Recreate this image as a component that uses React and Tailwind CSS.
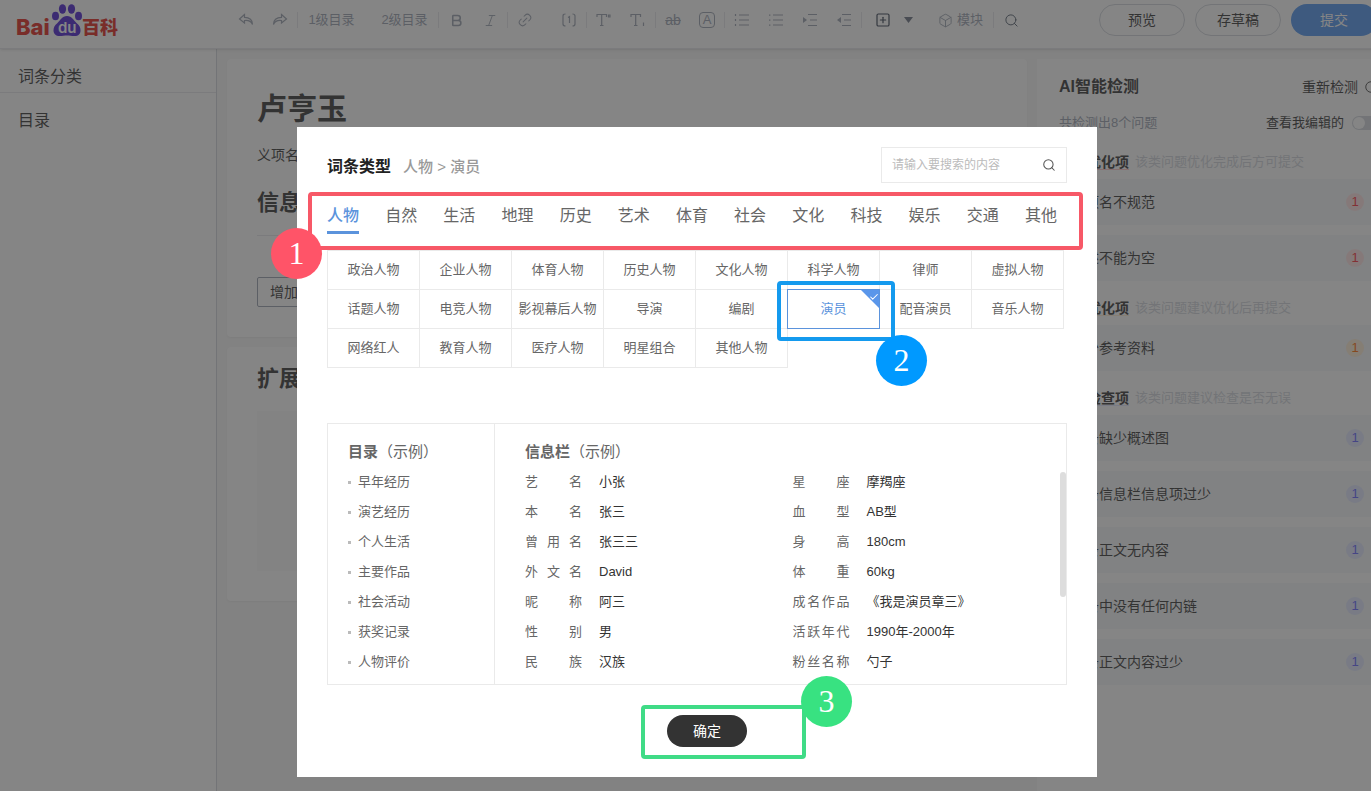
import { useState } from 'react';
import {
    Bold, Italic, Link2, Search, SquarePlus, Box, RotateCw, Check
} from 'lucide-react';

const tabs = ['人物', '自然', '生活', '地理', '历史', '艺术', '体育', '社会', '文化', '科技', '娱乐', '交通', '其他'];

const types = [
    '政治人物', '企业人物', '体育人物', '历史人物', '文化人物', '科学人物', '律师', '虚拟人物',
    '话题人物', '电竞人物', '影视幕后人物', '导演', '编剧', '演员', '配音演员', '音乐人物',
    '网络红人', '教育人物', '医疗人物', '明星组合', '其他人物'
];

const catalog = ['早年经历', '演艺经历', '个人生活', '主要作品', '社会活动', '获奖记录', '人物评价'];

const infoColumns = [
    [['艺名', '小张'], ['本名', '张三'], ['曾用名', '张三三'], ['外文名', 'David'], ['昵称', '阿三'], ['性别', '男'], ['民族', '汉族']],
    [['星座', '摩羯座'], ['血型', 'AB型'], ['身高', '180cm'], ['体重', '60kg'], ['成名作品', '《我是演员章三》'], ['活跃年代', '1990年-2000年'], ['粉丝名称', '勺子']]
];

const checks = [
    {
        title: '必须优化项', hint: '该类问题优化完成后方可提交', line: 'decoration-red-200',
        badge: 'bg-red-100 text-red-500', items: ['义项名不规范', '概述不能为空']
    },
    {
        title: '建议优化项', hint: '该类问题建议优化后再提交', line: 'decoration-orange-100',
        badge: 'bg-orange-100 text-orange-500', items: ['缺少参考资料']
    },
    {
        title: '建议检查项', hint: '该类问题建议检查是否无误', line: 'decoration-indigo-100',
        badge: 'bg-indigo-100 text-indigo-500',
        items: ['词条缺少概述图', '词条信息栏信息项过少', '词条正文无内容', '词条中没有任何内链', '词条正文内容过少']
    }
];

function Logo() {
    return (
        <a href="#" aria-label="百度百科" className="ml-4 block">
            <svg width="104" height="32" viewBox="0 0 104 32" className="overflow-visible" fontFamily="Inter, 'Noto Sans CJK SC', sans-serif" fontWeight="800">
                <text x="0" y="31" fontSize="22" fill="#e1251b">Bai</text>
                <g fill="#4a1fd0">
                    <ellipse cx="39.500" cy="12" rx="3.500" ry="4.300" />
                    <ellipse cx="46.500" cy="5" rx="3.600" ry="4.800" />
                    <ellipse cx="55.500" cy="5" rx="3.600" ry="4.800" />
                    <ellipse cx="62.500" cy="12" rx="3.500" ry="4.300" />
                    <path d="M51 12c-5 0-6.500 4-9.500 7-3 2.500-4 4.500-4 7.500 0 3.500 2.500 5.500 6 5.500 3 0 5-.5 7.500-.5s4.500.5 7.500.5c4 0 6-2 6-5.500 0-3-1-5-4-7.500-3-3-4.500-7-9.500-7z" />
                </g>
                <text x="42" y="29" fontSize="15" fontWeight="600" fill="#fff">du</text>
                <text x="66" y="30" fontSize="18" fill="#e1251b">百科</text>
            </svg>
        </a>
    );
}

function Tool({ label, children }) {
    return (
        <button type="button" aria-label={label} className="w-[34px] h-8 flex items-center justify-center">
            {children}
        </button>
    );
}

function Divider() {
    return <span className="w-px h-4 bg-gray-200" />;
}

function LineIcon({ d, fill, size = 16 }) {
    return (
        <svg width={size} height={size} viewBox="0 0 16 16" fill="none" stroke="currentColor" strokeWidth="1.2">
            <path d={d} />
            {fill && <path d={fill} fill="currentColor" stroke="none" />}
        </svg>
    );
}

function Toolbar() {
    return (
        <div className="ml-[109px] flex items-center text-[13px] text-gray-400">
            <Tool label="撤销"><LineIcon d="M6.500 2.500 1.500 7l5 4V8.500c4-.5 6.500.5 8 4 .2-4.500-3-7.200-8-7.200z" /></Tool>
            <Tool label="重做"><LineIcon d="m9.500 2.500 5 4.500-5 4V8.500c-4-.5-6.500.5-8 4-.2-4.500 3-7.200 8-7.200z" /></Tool>
            <Divider />
            <button type="button" className="w-[67px]">1级目录</button>
            <button type="button" className="ml-1.5 w-[67px]">2级目录</button>
            <Divider />
            <Tool label="加粗"><Bold size={15} strokeWidth={2.5} /></Tool>
            <Tool label="斜体"><Italic size={15} strokeWidth={1.5} /></Tool>
            <Divider />
            <Tool label="链接"><Link2 size={16} strokeWidth={1.5} className="-rotate-45" /></Tool>
            <span className="w-2.5" />
            <Tool label="参考资料"><LineIcon d="M4.500 2C2.500 2 2 2.500 2 4v8c0 1.500.5 2 2.500 2M11.500 2c2 0 2.500.5 2.500 2v8c0 1.500-.5 2-2.500 2M7 5.500l1.500-1V11" /></Tool>
            <Divider />
            <Tool label="上标"><LineIcon d="M1 5V2.500h9.500V5M5.700 2.500v11M4 13.500h3.500M12.500 3h1.500v2h-1.500z" /></Tool>
            <Tool label="下标"><LineIcon d="M1 5V2.500h9.500V5M5.700 2.500v11M4 13.500h3.500M13.500 10.500v3.500" /></Tool>
            <Divider />
            <Tool label="删除线"><span className="line-through text-sm leading-4">ab</span></Tool>
            <Tool label="文字样式"><span className="size-4 border border-current rounded-sm text-[13px] leading-[14px]">A</span></Tool>
            <Divider />
            <Tool label="有序列表"><LineIcon d="M5 3h10M5 8h10M5 13h10M1.500 2v2M1.500 7v2M1.500 12v2" /></Tool>
            <Tool label="无序列表"><LineIcon d="M5 3h10M5 8h10M5 13h10" fill="M1 2.400h1.400v1.400H1zM1 7.400h1.400v1.400H1zM1 12.400h1.400v1.400H1z" /></Tool>
            <Tool label="增加缩进"><LineIcon d="M6 2.500h9M8 8h7M6 13.500h9" fill="M1 5v6l4-3z" /></Tool>
            <Tool label="减少缩进"><LineIcon d="M6 2.500h9M8 8h7M6 13.500h9" fill="M5 5v6L1 8z" /></Tool>
            <Divider />
            <span className="ml-1 flex text-gray-700">
                <Tool label="插入"><SquarePlus size={16} strokeWidth={1.8} /></Tool>
                <button type="button" aria-label="更多插入" className="w-4 flex items-center justify-center text-gray-500">
                    <svg width="9" height="6" viewBox="0 0 9 6"><path d="M0 0h9L4.500 6z" fill="currentColor" /></svg>
                </button>
            </span>
            <button type="button" className="ml-3 w-[65px] flex items-center justify-center gap-1">
                <Box size={15} strokeWidth={1.5} />模块
            </button>
            <Divider />
            <span className="text-gray-600"><Tool label="搜索"><Search size={15} strokeWidth={1.5} /></Tool></span>
        </div>
    );
}

function Header() {
    return (
        <header className="relative flex items-center pt-1 pb-3 pr-[17px] bg-white border-b border-gray-200 shadow-sm">
            <Logo />
            <Toolbar />
            <div className="ml-auto flex gap-2.5 text-sm">
                <button type="button" className="w-[86px] h-8 rounded-full border border-gray-300 text-[#333]">预览</button>
                <button type="button" className="w-[86px] h-8 rounded-full border border-gray-300 text-[#333]">存草稿</button>
                <button type="button" className="w-[86px] h-8 rounded-full bg-[#4e94f0] text-white">提交</button>
            </div>
        </header>
    );
}

function CheckPanel() {
    return (
        <aside className="flex-1 mt-2.5 pl-[22px] pr-4 bg-white text-sm text-[#333]">
            <div className="flex items-center justify-between pt-4 h-10">
                <h2 className="text-base font-bold">AI智能检测</h2>
                <button type="button" className="flex items-center gap-1.5">重新检测<RotateCw size={14} strokeWidth={1.5} /></button>
            </div>
            <div className="flex items-end justify-between h-8 text-[13px] leading-4">
                <span className="text-gray-400">共检测出8个问题</span>
                <label className="flex items-center gap-2">
                    查看我编辑的
                    <input
                        type="checkbox"
                        className="appearance-none w-[26px] h-3.5 rounded-full bg-gray-300 before:block before:size-3 before:m-px before:rounded-full before:bg-white"
                    />
                </label>
            </div>
            <div className="pt-1">
                {checks.map(group => (
                    <section key={group.title}>
                        <h3 className="h-11 pt-2.5 flex items-center gap-1.5 font-bold">
                            <span className={`underline underline-offset-2 ${group.line}`}>{group.title}</span>
                            <span className="text-[13px] font-normal text-gray-300">{group.hint}</span>
                        </h3>
                        <ul className="flex flex-col gap-2.5">
                            {group.items.map(item => (
                                <li key={item} className="flex items-center justify-between h-[46px] pl-3 pr-3.5 bg-[#f5f7fa]">
                                    {item}
                                    <span className={`size-[18px] rounded-full text-center text-[13px] leading-[18px] ${group.badge}`}>1</span>
                                </li>
                            ))}
                        </ul>
                    </section>
                ))}
            </div>
        </aside>
    );
}

function Editor() {
    return (
        <main className="w-[800px] my-2.5 flex flex-col gap-2.5 text-[#333]">
            <section className="px-[30px] pt-7 pb-[30px] bg-white rounded-sm shadow-xs">
                <h1 className="text-3xl leading-[44px] font-bold">卢亨玉</h1>
                <p className="mt-3.5 text-sm leading-5">义项名</p>
                <h2 className="mt-[22px] pb-4 text-[22px] leading-8 font-bold border-b border-gray-200">信息栏</h2>
                <button type="button" className="mt-[41px] h-[30px] px-3 text-sm border border-gray-400 rounded-xs">增加信息项</button>
            </section>
            <section className="px-[30px] pt-4 pb-[30px] bg-white rounded-sm shadow-xs">
                <h2 className="text-[22px] leading-8 font-bold">扩展内容</h2>
                <div className="mt-4 h-40 bg-gray-50" />
            </section>
        </main>
    );
}

function InfoList({ rows }) {
    return (
        <dl className="flex-1">
            {rows.map(([name, value]) => (
                <div key={name} className="flex gap-[17px] leading-[30px]">
                    <dt className="w-[57px] flex justify-between text-[#666]">
                        {name.split('').map((char, i) => <span key={i}>{char}</span>)}
                    </dt>
                    <dd className="text-[#333]">{value}</dd>
                </div>
            ))}
        </dl>
    );
}

// Numbered step: coloured frame plus a round counter
function Step({ number, frame, dot }) {
    return (
        <>
            <div className={`absolute border-4 rounded-sm pointer-events-none ${frame}`} />
            <div className={`absolute size-[51px] rounded-full text-center text-white text-[32px] leading-[51px] font-['Liberation_Serif',serif] ${dot}`}>
                {number}
            </div>
        </>
    );
}

function TypeDialog() {
    const [tab, setTab] = useState('人物');
    const [type, setType] = useState('演员');

    return (
        <div role="dialog" aria-label="词条类型" className="relative w-[800px] px-[30px] pt-5 pb-[30px] bg-white">
            <div className="flex items-center justify-between">
                <h2 className="pt-1 flex items-baseline gap-3 text-base font-bold text-[#222]">
                    词条类型
                    <span className="text-[15px] font-medium text-[#999]">{tab} &gt; {type}</span>
                </h2>
                <div className="w-[186px] h-9 px-2.5 flex items-center border border-[#eaeaea]">
                    <input
                        type="text"
                        aria-label="搜索"
                        placeholder="请输入要搜索的内容"
                        className="flex-1 min-w-0 text-xs outline-none placeholder:text-[#bbb]"
                    />
                    <Search size={14} strokeWidth={1.8} className="text-[#555]" />
                </div>
            </div>

            <div className="mt-4 pr-2.5 flex justify-between text-base text-[#666]">
                {tabs.map(name => (
                    <button
                        key={name}
                        type="button"
                        onClick={() => setTab(name)}
                        className={name === tab ? 'h-[35px] pt-0.5 border-b-3 border-[#5b93dc] font-medium text-[#5b93dc]' : 'h-[35px] pt-0.5 border-b-3 border-transparent'}
                    >
                        {name}
                    </button>
                ))}
            </div>

            <div className="mt-4 pl-px pt-px grid grid-cols-[repeat(8,92px)] text-[13px] text-[#666]">
                {types.map(name => (
                    <button
                        key={name}
                        type="button"
                        onClick={() => setType(name)}
                        className={name === type
                            ? 'relative z-10 -ml-px -mt-px h-10 border border-[#5b93dc] text-[#5b93dc]'
                            : '-ml-px -mt-px h-10 border border-[#eaeaea]'}
                    >
                        {name}
                        {name === type && (
                            <span className="absolute top-0 right-0 size-[18px] bg-[#5a96ea] [clip-path:polygon(0_0,100%_0,100%_100%)]">
                                <Check size={10} strokeWidth={2.5} className="ml-auto mt-0.5 text-white" />
                            </span>
                        )}
                    </button>
                ))}
            </div>

            <div className="mt-[55px] flex border border-[#eaeaea] text-[13px] text-[#666]">
                <div className="w-[167px] pl-5 pt-[13px] pb-[7px] border-r border-[#eaeaea]">
                    <h3 className="text-[15px] leading-[30px] font-bold">目录<span className="font-normal">（示例）</span></h3>
                    <ul>
                        {catalog.map(name => (
                            <li key={name} className="flex items-center gap-[7px] leading-[30px]">
                                <span className="size-[3px] bg-[#bbb]" />{name}
                            </li>
                        ))}
                    </ul>
                </div>
                <div className="flex-1 pl-[30px] pt-[13px] flex flex-col">
                    <h3 className="text-[15px] leading-[30px] font-bold">信息栏<span className="font-normal">（示例）</span></h3>
                    <div className="flex">
                        <InfoList rows={infoColumns[0]} />
                        <InfoList rows={infoColumns[1]} />
                        <div className="mt-[5px] w-1.5 h-[125px] rounded-full bg-[#ddd]" />
                    </div>
                </div>
            </div>

            <div className="mt-[30px] flex justify-center">
                <button type="button" className="ml-5 w-20 h-8 rounded-full bg-[#333] text-sm text-white">确定</button>
            </div>

            <Step number={1} frame="left-[11px] top-[65px] w-[775px] h-[58px] border-[#f75867]" dot="left-[-26px] top-[101px] bg-[#ff5468]" />
            <Step number={2} frame="z-20 left-[480px] top-[154px] w-[118px] h-[60px] border-[#149aee]" dot="z-20 left-[579px] top-[208px] bg-[#0099ff]" />
            <Step number={3} frame="left-[344px] top-[578px] w-[165px] h-[54px] border-[#3fdb86]" dot="left-[504px] top-[549px] bg-[#38e281]" />
        </div>
    );
}

export default function App() {
    return (
        <div className="h-screen overflow-hidden font-['Liberation_Sans','Noto_Sans_CJK_SC',sans-serif]">
            <div className="relative min-w-[1394px] h-full flex flex-col bg-[#f7f7f7]">
                <Header />
                <div className="flex-1 flex">
                    <nav className="w-[217px] bg-white border-r border-gray-300 text-base text-[#333]">
                        <a href="#" className="block pl-[18px] pt-3 h-11 leading-8 border-b border-gray-200">词条分类</a>
                        <a href="#" className="block pl-[18px] pt-3 h-11 leading-8">目录</a>
                    </nav>
                    <div className="flex-1 pl-2.5 flex items-start gap-2.5">
                        <Editor />
                        <div className="flex-1 self-stretch flex"><CheckPanel /></div>
                    </div>
                </div>

                <div className="absolute inset-0 z-10 pt-[127px] flex items-start justify-center bg-[#333]/60">
                    <TypeDialog />
                </div>
            </div>
        </div>
    );
}
